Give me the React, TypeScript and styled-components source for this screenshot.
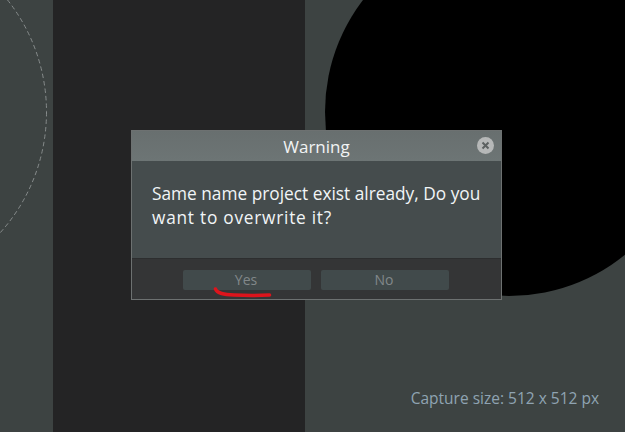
import React from "react";
import styled, { createGlobalStyle } from "styled-components";

const GlobalStyle = createGlobalStyle`
  html, body {
    margin: 0;
    padding: 0;
    background: #3d4342;
  }
`;

const Stage = styled.div`
  position: relative;
  display: flex;
  width: 625px;
  height: 432px;
  overflow: hidden;
  font-family: "Open Sans", "Noto Sans", sans-serif;
`;

const SidePanel = styled.div`
  position: relative;
  width: 53px;
  background: #3d4342;
  overflow: hidden;
`;

const GuideCircle = styled.svg`
  display: block;
`;

const DarkColumn = styled.div`
  width: 252px;
  background: #242425;
`;

const PreviewPanel = styled.div`
  position: relative;
  flex: 1;
  display: flex;
  align-items: flex-end;
  justify-content: flex-end;
  background: #3d4342;
  overflow: hidden;
`;

const CaptureDisc = styled.div`
  position: absolute;
  left: 20px;
  top: -72px;
  width: 368px;
  height: 368px;
  border-radius: 50%;
  background: #000;
`;

const CaptureSize = styled.div`
  position: relative;
  padding: 0 26px 24px 0;
  font-size: 15.5px;
  line-height: 20px;
  color: #8fa3b2;
`;

const Dialog = styled.div`
  position: absolute;
  left: 131px;
  top: 130px;
  width: 371px;
  height: 170px;
  box-sizing: border-box;
  display: flex;
  flex-direction: column;
  border: 1px solid #6d7171;
`;

const TitleBar = styled.div`
  position: relative;
  height: 30px;
  display: flex;
  align-items: center;
  justify-content: center;
  background: linear-gradient(#686f6f, #6d7575);
  color: #f2f4f4;
  font-size: 17px;
`;

const CloseButton = styled.button`
  position: absolute;
  right: 7px;
  top: 6px;
  width: 17px;
  height: 17px;
  padding: 0;
  display: flex;
  align-items: center;
  justify-content: center;
  border: 0;
  border-radius: 50%;
  background: #b6b8b8;
`;

const Body = styled.div`
  height: 97px;
  box-sizing: border-box;
  padding: 21px 10px 0 20px;
  background: #454c4d;
  color: #f1f5f7;
  font-size: 17.3px;
  line-height: 24px;
`;

const MessageLine = styled.div<{ $spacing?: number }>`
  letter-spacing: ${(p) => p.$spacing ?? 0}px;
`;

const Footer = styled.div`
  flex: 1;
  display: flex;
  justify-content: center;
  gap: 10px;
  padding: 11px 1px 0 0;
  background: #343536;
  border-top: 1px solid #2d2e2f;
`;

const ActionButton = styled.button`
  width: 128px;
  height: 20px;
  padding: 0 2px 0 0;
  border: 0;
  border-radius: 2px;
  background: #414a4b;
  color: #81888a;
  font-family: inherit;
  font-size: 14px;
  line-height: 20px;
`;

const Scribble = styled.svg`
  position: absolute;
  left: 210px;
  top: 284px;
`;

export default function App() {
  return (
    <Stage>
      <GlobalStyle />
      <SidePanel>
        <GuideCircle width="53" height="432" viewBox="0 0 53 432">
          <circle
            cx="-134"
            cy="112"
            r="180.5"
            fill="none"
            stroke="#868b8b"
            strokeWidth="1"
            strokeDasharray="4.5 3"
          />
        </GuideCircle>
      </SidePanel>
      <DarkColumn />
      <PreviewPanel>
        <CaptureDisc />
        <CaptureSize>Capture size: 512 x 512 px</CaptureSize>
      </PreviewPanel>
      <Dialog>
        <TitleBar>
          Warning
          <CloseButton aria-label="Close">
            <svg width="9" height="9" viewBox="0 0 9 9">
              <path
                d="M1.5 1.5 7.5 7.5M7.5 1.5 1.5 7.5"
                stroke="#5c6161"
                strokeWidth="2"
              />
            </svg>
          </CloseButton>
        </TitleBar>
        <Body>
          <MessageLine>Same name project exist already, Do you</MessageLine>
          <MessageLine $spacing={0.75}>want to overwrite it?</MessageLine>
        </Body>
        <Footer>
          <ActionButton>Yes</ActionButton>
          <ActionButton>No</ActionButton>
        </Footer>
      </Dialog>
      <Scribble width="66" height="16" viewBox="0 0 66 16">
        <path
          d="M5.5 5C7 9.5 14 10.5 24 11 36 11.6 50 11.5 59.5 11"
          fill="none"
          stroke="#dd141c"
          strokeWidth="3.6"
          strokeLinecap="round"
        />
      </Scribble>
    </Stage>
  );
}
